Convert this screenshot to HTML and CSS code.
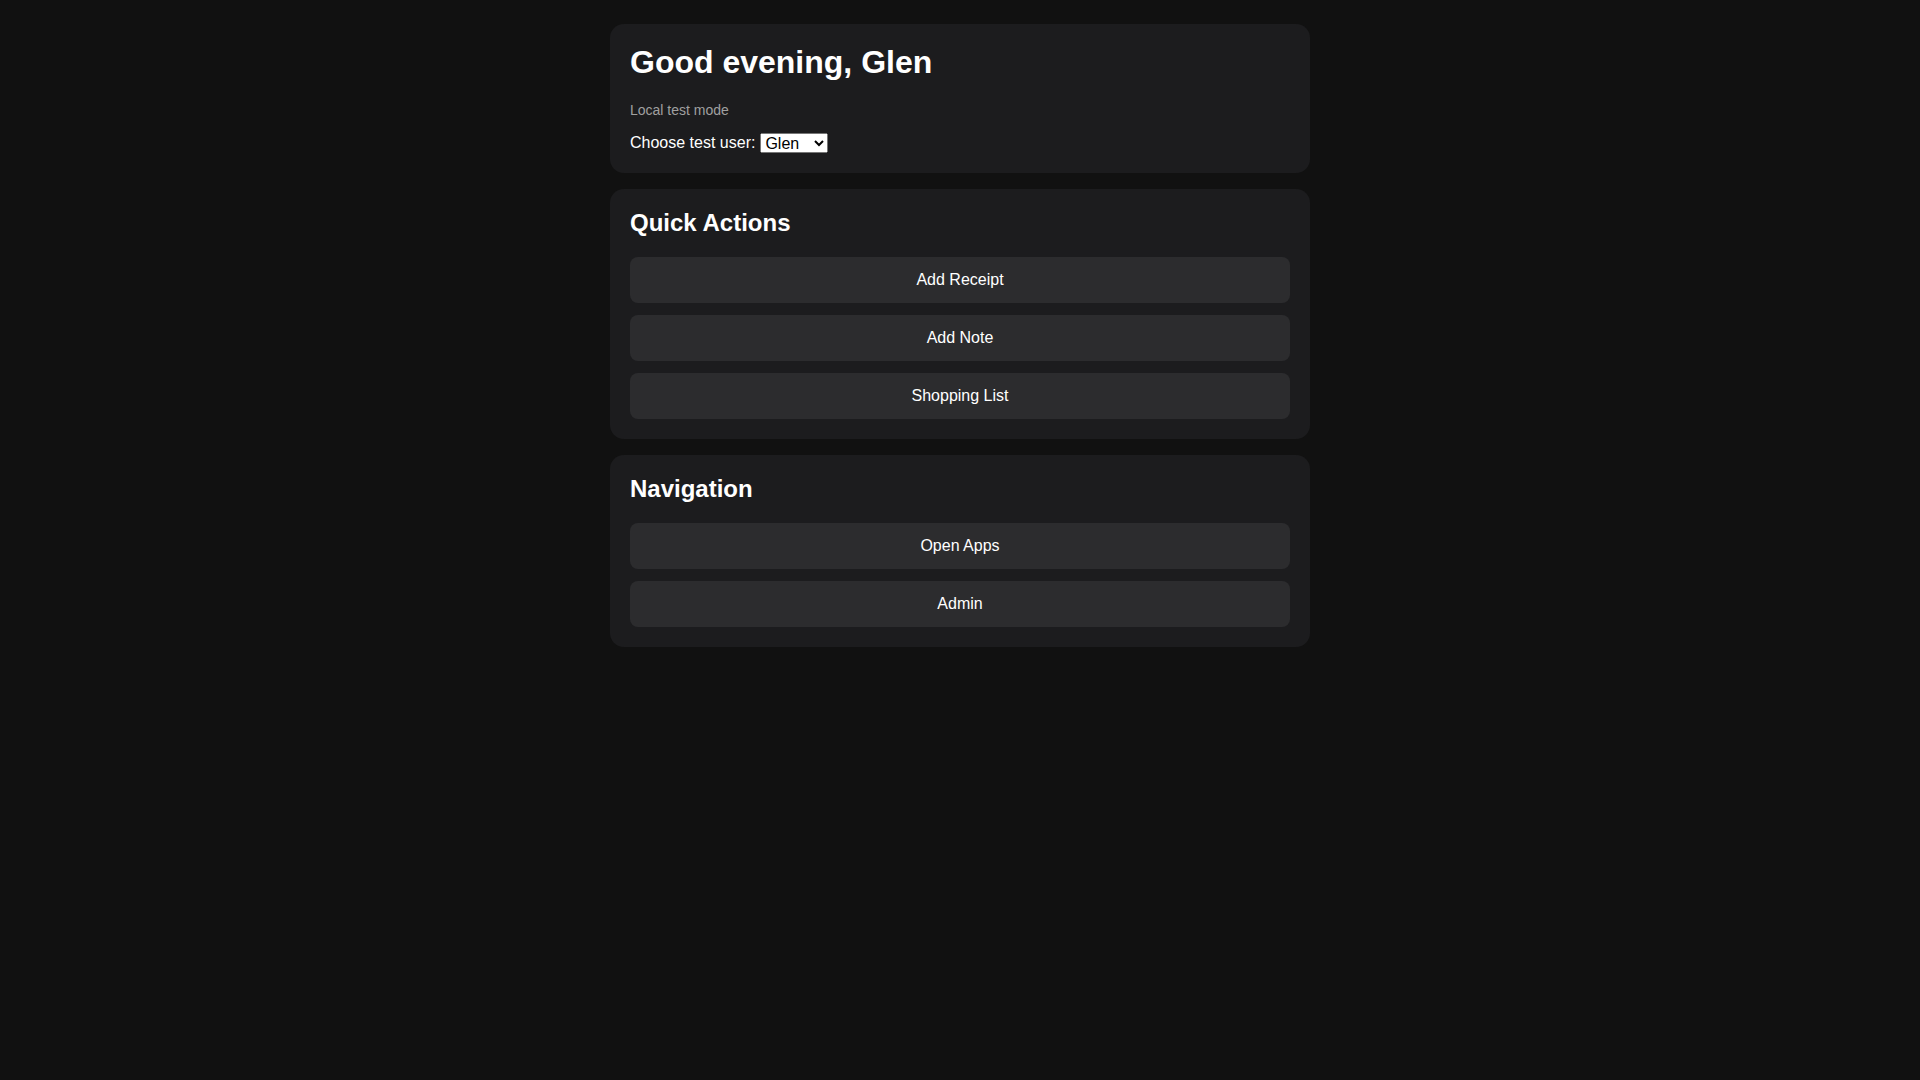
FILE: index.html
```html
<!DOCTYPE html>
<html lang="en">
<head>
<meta charset="utf-8">
<title>Home</title>
<link rel="stylesheet" href="styles.css">
</head>
<body>
<main class="container">
  <section class="card">
    <h1 class="greeting">Good evening, Glen</h1>
    <p class="muted">Local test mode</p>
    <div class="user-row">
      <label for="user">Choose test user:</label>
      <select id="user" class="user-select">
        <option>Glen</option>
        <option>Anna</option>
      </select>
    </div>
  </section>
  <section class="card">
    <h2 class="card-title">Quick Actions</h2>
    <div class="btn-list">
      <button class="btn">Add Receipt</button>
      <button class="btn">Add Note</button>
      <button class="btn">Shopping List</button>
    </div>
  </section>
  <section class="card">
    <h2 class="card-title">Navigation</h2>
    <div class="btn-list">
      <button class="btn">Open Apps</button>
      <button class="btn">Admin</button>
    </div>
  </section>
</main>
</body>
</html>
```
FILE: styles.css
```css
html, body {
  margin: 0;
  padding: 0;
  background: #111111;
  color: #ffffff;
  font-family: "Liberation Sans", Arial, sans-serif;
}
.container {
  max-width: 700px;
  margin: 0 auto;
  padding: 24px 0;
}
.card {
  background: #1c1c1e;
  border-radius: 14px;
  padding: 20px;
  margin-bottom: 16px;
}
.greeting {
  font-size: 32px;
  font-weight: bold;
  margin: 0 0 21px;
}
.muted {
  font-size: 14px;
  color: #a0a0a0;
  margin: 0 0 15px;
}
.user-row {
  font-size: 16px;
  line-height: 20px;
  display: flex;
  align-items: center;
  gap: 5px;
}
.user-select {
  font-family: "Liberation Sans", Arial, sans-serif;
  font-size: 16px;
  width: 68px;
  height: 20px;
}
.card-title {
  font-size: 24px;
  font-weight: bold;
  margin: 0 0 20px;
}
.btn-list {
  display: flex;
  flex-direction: column;
  gap: 12px;
}
.btn {
  display: block;
  width: 100%;
  background: #2c2c2e;
  color: #ffffff;
  border: none;
  border-radius: 8px;
  padding: 14px;
  font-family: "Liberation Sans", Arial, sans-serif;
  font-size: 16px;
  line-height: 18px;
  cursor: pointer;
}
```
